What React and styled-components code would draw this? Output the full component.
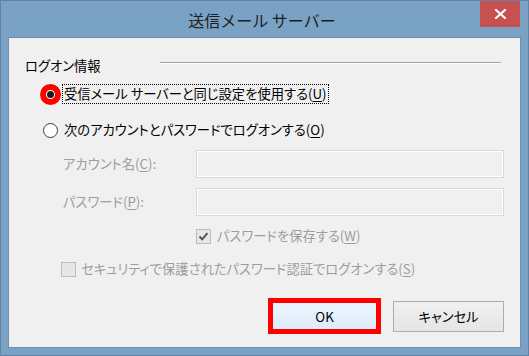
import React from 'react';
import styled, { createGlobalStyle } from 'styled-components';

const GlobalStyle = createGlobalStyle`
  html, body {
    margin: 0;
    padding: 0;
    background: #7aa2c4;
  }
  body {
    font-family: "Noto Sans CJK JP", "Noto Sans", sans-serif;
    font-size: 13.3px;
    font-feature-settings: "palt";
  }
`;

const Window = styled.div`
  width: 529px;
  height: 356px;
  box-sizing: border-box;
  border: 1px solid #5f82a5;
  background: #7aa2c4;
  display: flex;
  flex-direction: column;
`;

const TitleBar = styled.div`
  height: 36px;
  flex: none;
  display: grid;
  grid-template-columns: 43px 1fr 48px;
`;

const Title = styled.div`
  grid-column: 2;
  text-align: center;
  line-height: 39px;
  font-size: 16px;
  color: #1e1e1e;
  font-feature-settings: normal;
`;

const CloseButton = styled.div`
  width: 40px;
  height: 26px;
  background: #c75050;
  display: flex;
  align-items: center;
  justify-content: center;
`;

const Client = styled.div`
  flex: 1;
  margin: 0 7px 7px 7px;
  border: 1px solid #6d8fb0;
  background: #f0f0f0;
  display: flex;
  flex-direction: column;
`;

const Row = styled.div`
  display: flex;
  align-items: center;
  height: ${p => p.$height}px;
  margin-top: ${p => p.$top}px;
  padding-left: ${p => p.$indent || 0}px;
  padding-right: ${p => p.$right || 0}px;
  justify-content: ${p => (p.$end ? 'flex-end' : 'flex-start')};
`;

const GroupLabel = styled.div`
  width: 135px;
  color: #000;
  line-height: 20px;
`;

const GroupLine = styled.div`
  flex: 1;
  align-self: flex-start;
  margin-top: 6px;
  margin-right: 19px;
  border-top: 1px solid #a0a0a0;
  border-bottom: 1px solid #ffffff;
`;

const Radio = styled.span`
  width: 15px;
  height: 15px;
  box-sizing: border-box;
  border-radius: 50%;
  background: #fff;
  border: ${p => (p.$marked ? '3px solid #ff0000' : '1px solid #3c3c3c')};
  box-shadow: ${p => (p.$marked ? '0 0 0 3px #ff0000' : 'none')};
  display: flex;
  align-items: center;
  justify-content: center;
  flex: none;
  &::after {
    content: '';
    display: ${p => (p.$checked ? 'block' : 'none')};
    width: 7px;
    height: 7px;
    border-radius: 50%;
    background: #1b1b1b;
  }
`;

const Label = styled.span`
  margin-left: ${p => p.$gap || 0}px;
  color: ${p => (p.$disabled ? '#9d9d9d' : '#000')};
  line-height: 18px;
  white-space: nowrap;
  border: 1px ${p => (p.$focus ? 'dotted #000' : 'solid transparent')};
  padding: 0 1px;
  width: ${p => (p.$width ? `${p.$width}px` : 'auto')};
  box-sizing: border-box;
  u {
    text-underline-offset: 2px;
  }
`;

const TextBox = styled.div`
  width: 308px;
  height: 28px;
  box-sizing: border-box;
  border: 1px solid #d9d9d9;
  box-shadow: inset 0 0 0 1px #ffffff;
  background: #f0f0f0;
`;

const CheckBox = styled.span`
  width: 15px;
  height: 15px;
  box-sizing: border-box;
  border: 1px solid #bcbcbc;
  background: #e6e6e6;
  display: flex;
  align-items: center;
  justify-content: center;
  flex: none;
`;

const Highlight = styled.div`
  width: 113px;
  height: 36px;
  box-sizing: border-box;
  border: 5px solid #ff0000;
  display: flex;
`;

const Button = styled.div`
  width: ${p => p.$width}px;
  height: ${p => p.$height}px;
  box-sizing: border-box;
  border: ${p => (p.$default ? 'none' : '1px solid #adadad')};
  background: ${p =>
    p.$default
      ? 'linear-gradient(#ebf4fc, #dcecfc)'
      : 'linear-gradient(#f0f0f0, #e5e5e5)'};
  display: flex;
  align-items: center;
  justify-content: center;
  color: #000;
  font-size: 13.3px;
  margin-left: ${p => p.$gap || 0}px;
`;

function Check() {
  return (
    <svg width="11" height="11" viewBox="0 0 11 11">
      <path d="M1.5 5.5 L4.2 8.3 L9.5 2.2" fill="none" stroke="#555" strokeWidth="2" />
    </svg>
  );
}

function CloseIcon() {
  return (
    <svg width="11" height="10" viewBox="0 0 11 10">
      <path d="M1 1 L10 9 M10 1 L1 9" stroke="#fff" strokeWidth="2.2" strokeLinecap="square" />
    </svg>
  );
}

export default function App() {
  return (
    <>
      <GlobalStyle />
      <Window>
        <TitleBar>
          <Title>送信メール サーバー</Title>
          <CloseButton>
            <CloseIcon />
          </CloseButton>
        </TitleBar>
        <Client>
          <Row $top={18} $height={20} $indent={16}>
            <GroupLabel>ログオン情報</GroupLabel>
            <GroupLine />
          </Row>
          <Row $top={8} $height={20} $indent={34}>
            <Radio $checked $marked />
            <Label $gap={4} $focus>
              受信メール サーバーと同じ設定を使用する(<u>U</u>)
            </Label>
          </Row>
          <Row $top={16} $height={20} $indent={34}>
            <Radio />
            <Label $gap={4}>
              次のアカウントとパスワードでログオンする(<u>O</u>)
            </Label>
          </Row>
          <Row $top={10} $height={28} $indent={52}>
            <Label $disabled $width={135}>
              アカウント名(<u>C</u>):
            </Label>
            <TextBox />
          </Row>
          <Row $top={10} $height={28} $indent={52}>
            <Label $disabled $width={135}>
              パスワード(<u>P</u>):
            </Label>
            <TextBox />
          </Row>
          <Row $top={12} $height={16} $indent={187}>
            <CheckBox>
              <Check />
            </CheckBox>
            <Label $disabled $gap={4}>
              パスワードを保存する(<u>W</u>)
            </Label>
          </Row>
          <Row $top={17} $height={16} $indent={52}>
            <CheckBox />
            <Label $disabled $gap={3}>
              セキュリティで保護されたパスワード認証でログオンする(<u>S</u>)
            </Label>
          </Row>
          <Row $top={21} $height={36} $right={16} $end>
            <Highlight>
              <Button $default $width={103} $height={26}>OK</Button>
            </Highlight>
            <Button $gap={12} $width={111} $height={31}>キャンセル</Button>
          </Row>
        </Client>
      </Window>
    </>
  );
}
